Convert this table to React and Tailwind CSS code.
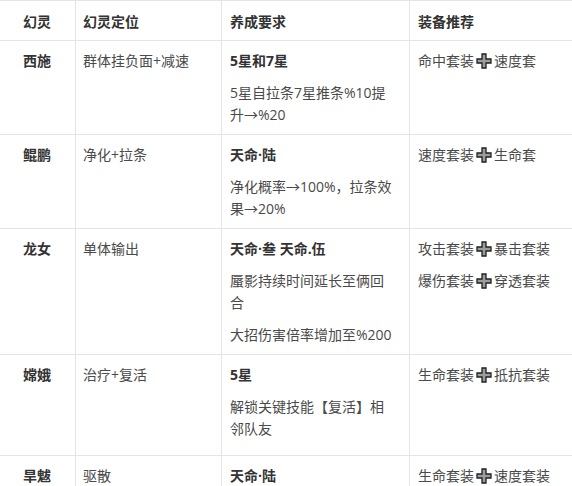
import React from 'react';

const Plus = () => (
  <svg
    width="16"
    height="16"
    viewBox="0 0 16 16"
    className="inline-block mx-[2px] align-[-3px]"
  >
    <path
      d="M6 1h4v5h5v4h-5v5H6v-5H1V6h5z"
      fill="#9c9c9c"
      stroke="#1f1f1f"
      strokeWidth="1.3"
      strokeLinejoin="miter"
    />
  </svg>
);

const Gear = ({ a, b }) => (
  <span>
    {a}
    <Plus />
    {b}
  </span>
);

const rows = [
  {
    name: '西施',
    role: '群体挂负面+减速',
    req: ['5星和7星', '5星自拉条7星推条%10提升→%20'],
    gear: [['命中套装', '速度套']],
  },
  {
    name: '鲲鹏',
    role: '净化+拉条',
    req: ['天命·陆', '净化概率→100%，拉条效果→20%'],
    gear: [['速度套装', '生命套']],
  },
  {
    name: '龙女',
    role: '单体输出',
    req: ['天命·叁 天命.伍', '蜃影持续时间延长至俩回合', '大招伤害倍率增加至%200'],
    gear: [
      ['攻击套装', '暴击套装'],
      ['爆伤套装', '穿透套装'],
    ],
  },
  {
    name: '嫦娥',
    role: '治疗+复活',
    req: ['5星', '解锁关键技能【复活】相邻队友'],
    gear: [['生命套装', '抵抗套装']],
    tall: true,
  },
  {
    name: '旱魃',
    role: '驱散',
    req: ['天命·陆'],
    gear: [['生命套装', '速度套装']],
  },
];

const cell = 'border-r border-b border-[#e1e4e8] pt-[9px] pl-2';

export default function App() {
  return (
    <div className="w-[572px] h-[486px] overflow-hidden bg-white font-['Open_Sans','Noto_Sans_CJK_SC',sans-serif] text-[14px] leading-[22px] text-[#4a4a4a]">
      <div className="grid grid-cols-[76px_146px_188px_200px] w-[610px] border-t border-[#e1e4e8]">
        {/* Header */}
        <div className="border-r border-b border-[#e1e4e8] pt-[10px] pb-[7px] pl-[23px] font-bold text-[#333]">幻灵</div>
        <div className="border-r border-b border-[#e1e4e8] pt-[10px] pb-[7px] pl-[7px] font-bold text-[#333]">幻灵定位</div>
        <div className="border-r border-b border-[#e1e4e8] pt-[10px] pb-[7px] pl-2 font-bold text-[#333]">养成要求</div>
        <div className="border-r border-b border-[#e1e4e8] pt-[10px] pb-[7px] pl-2 font-bold text-[#333]">装备推荐</div>

        {rows.map((r) => (
          <React.Fragment key={r.name}>
            <div className={`${cell} pl-[23px] font-bold text-[#333] ${r.tall ? 'pb-[15px]' : 'pb-2'}`}>
              {r.name}
            </div>
            <div className={`${cell} pl-[7px] ${r.tall ? 'pb-[15px]' : 'pb-2'}`}>{r.role}</div>
            <div className={`${cell} pr-[15px] flex flex-col gap-[10px] ${r.tall ? 'pb-[15px]' : 'pb-2'}`}>
              {r.req.map((t, i) => (
                <p key={i} className={i === 0 ? 'font-bold text-[#333]' : ''}>
                  {t}
                </p>
              ))}
            </div>
            <div className={`${cell} flex flex-col gap-[10px] ${r.tall ? 'pb-[15px]' : 'pb-2'}`}>
              {r.gear.map(([a, b], i) => (
                <p key={i}>
                  <Gear a={a} b={b} />
                </p>
              ))}
            </div>
          </React.Fragment>
        ))}
      </div>
    </div>
  );
}
